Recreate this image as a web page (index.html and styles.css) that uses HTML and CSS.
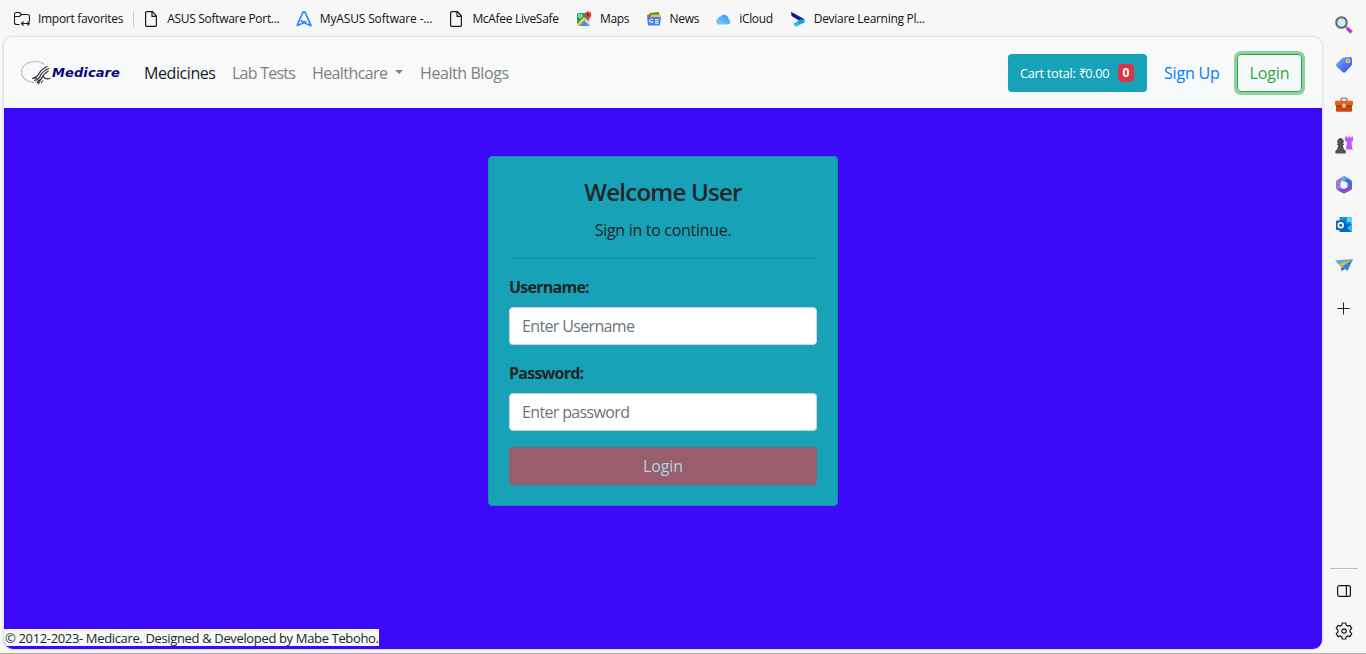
FILE: index.html
```html
<!DOCTYPE html>
<html lang="en">
<head>
<meta charset="utf-8">
<title>Medicare</title>
<link rel="stylesheet" href="styles.css">
</head>
<body>
<div class="browser">
  <div class="main">
    <div class="favorites">
      <div class="fav"><svg class="ico" viewBox="0 0 16 16" fill="none" stroke="#1b1b1b" stroke-width="1.1"><path d="M5.5 13.5H2.5a2 2 0 0 1-2-2v-8a2 2 0 0 1 2-2h3l2 2h6a2 2 0 0 1 2 2v5M.5 5.500h5l2-2M7.500 12.500h8M9.500 10.500l-2 2 2 2M13.500 10.500l2 2-2 2"/></svg><span class="w84">Import favorites</span></div>
      <div class="sep"></div>
      <div class="fav"><svg class="ico" viewBox="0 0 16 16" fill="none" stroke="#1b1b1b" stroke-width="1.200"><path d="M4 .6h5.500L13.400 5v9a1.300 1.300 0 0 1-1.300 1.400H4A1.300 1.300 0 0 1 2.600 14V2A1.300 1.300 0 0 1 4 .6zM9 .6V5.400h4.400"/></svg><span class="w112">ASUS Software Port...</span></div>
      <div class="fav"><svg class="ico" viewBox="0 0 16 16" fill="none" stroke="#2a8cf5" stroke-width="1.700" stroke-linejoin="round"><path d="M1 14.700 7 1.200h2l6 13.500-4.500-2L4.800 9.500M1 14.700l9.500-4.200"/></svg><span class="w112 looser">MyASUS Software -...</span></div>
      <div class="fav"><svg class="ico" viewBox="0 0 16 16" fill="none" stroke="#1b1b1b" stroke-width="1.200"><path d="M4 .6h5.500L13.400 5v9a1.300 1.300 0 0 1-1.300 1.400H4A1.300 1.300 0 0 1 2.600 14V2A1.300 1.300 0 0 1 4 .6zM9 .6V5.400h4.400"/></svg><span class="w87">McAfee LiveSafe</span></div>
      <div class="fav"><svg class="ico" viewBox="0 0 16 16"><path fill="#1fa463" d="M3 2h8v6L3 15H2q-1 0-1-1V4q0-2 2-2z"/><path fill="#f8cf3c" d="m1 13 7-7 2 2-7 7H1z"/><path fill="#4a8af4" d="m3 15 5.500-5.500L14 15z"/><path fill="#dcdcdc" d="m9 8 5-1v8z"/><circle cx="4.300" cy="5" r="1.500" fill="none" stroke="#fff"/><path fill="#dc4035" d="M12 .6a3.200 3.200 0 0 1 3.200 3.300c0 2.400-2.400 3.400-3.200 7-.8-3.600-3.200-4.600-3.200-7A3.200 3.200 0 0 1 12 .6z"/><circle cx="12" cy="4" r="1.100" fill="#7c1f18"/></svg><span class="w29">Maps</span></div>
      <div class="fav"><svg class="ico" viewBox="0 0 16 16"><path fill="#259b4d" d="m4 2 9-1 .5 6H4z"/><path fill="#e9493d" d="m1 4 3-1 1 5H2z"/><path fill="#f7bd24" d="M5 3.500h9l1 2-1 4H4z"/><path fill="#4b80e8" d="M1 6h14l-1 8.500H2z"/><path d="M6.800 8.600a1.800 1.800 0 1 0 .2 2.200H5.500M9 8.700h3.500M9 10.500h3.500M9 12.300h3.500" stroke="#fff" stroke-width="1" fill="none"/></svg><span class="w29">News</span></div>
      <div class="fav"><svg class="ico" viewBox="0 0 16 16"><defs><linearGradient id="cl" x1="0" y1="1" x2="1" y2="0"><stop stop-color="#8fd0ff"/><stop offset="1" stop-color="#2b94f7"/></linearGradient></defs><path fill="url(#cl)" d="M3.500 13.500a3 3 0 0 1-.7-5.700 2.600 2.600 0 0 1 2.700-2.300 4.500 4.500 0 0 1 8 2.800 2.700 2.700 0 0 1-.5 5.200z"/></svg><span class="w34">iCloud</span></div>
      <div class="fav"><svg class="ico" viewBox="0 0 16 16"><path fill="#071c8c" d="m1 .8 13.500 7.400-2.500 3L1.500 5z"/><path fill="#199fdf" d="m10 8.500 4.500-.3v3.400L6 15.500 4 13z"/><path fill="#32c2e8" d="m4 11.500 4 .5 2 1.800L6 15.500 4 14z"/></svg><span class="w111">Deviare Learning Pl...</span></div>
    </div>
    <div class="page">
      <nav class="navbar">
        <div class="brand">
          <svg class="seal" viewBox="0 0 31 24" fill="none"><ellipse cx="14" cy="11" rx="13.500" ry="10.500" stroke="#b4b4ba" stroke-width="1.200" stroke-dasharray="2 .5"/><path fill="#f8f9fa" d="M14 13 25 2l5 2-2 17-9 2z"/><path stroke="#35353b" stroke-width="1.200" d="M11 17.500q5-1 7-5t8.500-7.300M13 19.500q5-1 6.500-5T28 7.500M16 20.500q4-1 5-4t6.500-6.500M11 17.500l5-.7M16 20.500l1.500 2.200 1.800-3.400M20 22l2-2.500M22 15q2 4 7.500 2.500"/></svg>
          <span class="brand-name">Medicare</span>
        </div>
        <div class="links">
          <a class="link active w72">Medicines</a>
          <a class="link w64 tight">Lab Tests</a>
          <a class="link drop"><span class="w76">Healthcare</span><i class="caret"></i></a>
          <a class="link w90">Health Blogs</a>
        </div>
        <div class="actions">
          <button class="cart"><span class="w90">Cart total: ₹0.00</span><b class="badge">0</b></button>
          <a class="signup">Sign Up</a>
          <button class="login-outline">Login</button>
        </div>
      </nav>
      <div class="content">
        <form class="card">
          <h4 class="title">Welcome User</h4>
          <p class="subtitle">Sign in to continue.</p>
          <hr class="rule">
          <label class="label" for="user">Username:</label>
          <input class="field" id="user" placeholder="Enter Username">
          <label class="label" for="pass">Password:</label>
          <input class="field" id="pass" type="password" placeholder="Enter password">
          <button class="submit" type="button">Login</button>
        </form>
      </div>
      <footer class="footer"><span class="copyright">© 2012-2023- Medicare. Designed &amp; Developed by Mabe Teboho.</span></footer>
    </div>
  </div>
  <aside class="sidebar">
    <div class="tools">
      <svg class="tool" viewBox="0 0 20 20"><path stroke="#c22df5" stroke-width="3.400" d="m13 13 4.500 4.500"/><path stroke="#888" stroke-width="2" d="m11 11 2 2"/><circle cx="7.500" cy="7.500" r="5.300" fill="#c9eaff" stroke="#66696e" stroke-width="2"/></svg>
      <svg class="tool" viewBox="0 0 20 20"><defs><linearGradient id="tg" x1="0" y1="0" x2="1" y2="1"><stop stop-color="#6fb4fa"/><stop offset="1" stop-color="#3c42ef"/></linearGradient></defs><path fill="url(#tg)" d="M10 2.500 16.500 2q1.500 0 1.500 1.500V9q0 1-1 2l-5.500 6q-1.500 1.500-3 0L2.700 11.500q-1.500-1.500 0-3L8 3.500q1-1 2-1z"/><circle cx="14" cy="6" r="1.600" fill="#8a78a8" stroke="#ffd83d" stroke-width="1.300"/></svg>
      <svg class="tool" viewBox="0 0 20 20"><path d="M7 6V4.500q0-1.300 1.300-1.300h3.400q1.300 0 1.300 1.300V6" fill="none" stroke="#8b8d91" stroke-width="1.500"/><rect x="2" y="8" width="16" height="8.700" rx="1.200" fill="#d4420f"/><rect x="1" y="5.800" width="18" height="5" rx="1.200" fill="#e5601c"/><path d="M2 11h16" stroke="#8f2e10"/><rect x="8.300" y="8.800" width="3.400" height="4" rx="1" fill="#cfd3d7"/></svg>
      <svg class="tool" viewBox="0 0 20 20"><path fill="#be55ff" d="M11 1.500h2V3h1.200V1.500h2V3h1.200V1.500H19V6l-1.500 1 .5 5.500 1 2h-7l1-7.500-2-1z"/><path fill="#505256" d="M1.500 18.500q-1-3 1.700-4.200l1-4.300H3V8.700h1.300a3.200 3.200 0 1 1 4.400 0H10V10H8.800l1 4.300q3.200 1.200 1.700 4.200z"/></svg>
      <svg class="tool" viewBox="0 0 20 20"><path fill="#3d73d9" d="M9 1.500q1-.5 2 0l6 3.500q1 .5 1 2v7l-5-2.500V8L7 5z"/><path fill="#9d79df" d="M9 1.500 7.500 5v8L10 14.500l-3 2.700-4-2.400q-1-.6-1-2V7q0-1.500 1-2z"/><path fill="#8550c9" d="m3 14.800 9-2 6-4V13q0 1.500-1 2l-6 3.300q-1 .5-2 0z"/><path fill="#5ac1eb" d="m9 1.500 4 2.300-5.500 3V5z"/><path fill="#f7f7f7" d="m10 6 3.500 2v4L10 14l-3.500-2V8z"/></svg>
      <svg class="tool" viewBox="0 0 20 20"><rect x="5.500" y="2" width="12" height="12" rx="1" fill="#1690dc"/><path fill="#50d9ff" d="M13 2h4.500v5H13z"/><path fill="#0c68be" d="M5 9h13v8H7q-2 0-2-2z"/><path fill="#35bdf2" d="m18 9-5 4 4.500 4q.5-.3.500-1z"/><rect x="2" y="5.500" width="9.500" height="9.500" rx="1" fill="#0b62bb"/><circle cx="6.700" cy="10.200" r="2.400" fill="none" stroke="#fff" stroke-width="1.700"/></svg>
      <svg class="tool" viewBox="0 0 20 20"><path fill="#40b7ee" d="M1 5.500 19 4 6.500 11.500z"/><path fill="#2689dc" d="M19 4 13.500 16 7 11z"/><path fill="#f8ae22" d="M19 4 4.500 9 7 12.500z"/><path fill="#1564bb" d="m7 16 .5-4L11 14z"/></svg>
      <svg class="tool plus" viewBox="0 0 20 20"><path d="M9.500 3.500v12M3.500 9.500h12" stroke="#222" stroke-width="1"/></svg>
    </div>
    <div class="settings">
      <svg class="tool" viewBox="0 0 20 20" fill="none" stroke="#151515" stroke-width="1.200"><rect x="3.600" y="4.600" width="12.800" height="10.800" rx="2"/><path d="M12.400 4.600v10.800"/></svg>
      <svg class="tool" viewBox="0 0 20 20" fill="none" stroke="#151515" stroke-width="1.200" stroke-linejoin="round"><path d="M8.300 2h3.400l.6 2.300 1.300.8 2.300-.7 1.800 3-1.700 1.700v1.800l1.700 1.700-1.800 3-2.300-.7-1.300.8-.6 2.300H8.300l-.6-2.300-1.300-.8-2.300.7-1.800-3L4 10.900V9.100L2.300 7.400l1.800-3 2.300.7 1.300-.8z"/><circle cx="10" cy="10" r="2.200"/></svg>
    </div>
  </aside>
</div>
</body>
</html>
```

FILE: styles.css
```css
* { box-sizing: border-box; }
body { margin: 0; background: #f7f7f7; color: #212529; font: 16px/24px "Open Sans", "Noto Sans", sans-serif; }
.browser { display: flex; width: 1366px; height: 654px; border-bottom: 1px solid #ababab; }
.main { width: 1322px; flex: none; padding-left: 4px; }
.favorites { display: flex; align-items: center; gap: 16.6px; height: 37px; padding-left: 10px; font-size: 12px; line-height: 16px; color: #111; letter-spacing: -.3px; white-space: nowrap; }
.fav { display: flex; align-items: center; gap: 8px; }
.ico { width: 16px; height: 16px; flex: none; }
.sep { width: 1px; height: 16px; margin: 0 -7px 0 -6px; background: #ccc; }
.looser { letter-spacing: -.15px; }
.w29 { width: 29px; }
.w34 { width: 34px; }
.w84 { width: 84px; }
.w87 { width: 87px; }
.w111 { width: 111px; }
.w112 { width: 112px; }
.page { display: flex; flex-direction: column; height: 612px; background: linear-gradient(#f8f9fa 70px, #3c0af9 71px); border-radius: 9px; overflow: hidden; box-shadow: 0 0 3px #bbb; }
.navbar { display: flex; align-items: center; height: 71px; flex: none; padding: 0 20px 0 17px; background: #f8f9fa; }
.brand { display: flex; align-items: center; width: 99px; }
.seal { width: 31px; height: 24px; flex: none; }
.brand-name { color: #060675; font: italic 700 13px/20px "DejaVu Sans", sans-serif; letter-spacing: .1px; }
.links { display: flex; gap: 16px; margin-left: 24px; white-space: nowrap; letter-spacing: -.42px; }
.link { color: #7f8080; }
.active { color: #191919; }
.tight { letter-spacing: -.75px; }
.w64 { width: 64px; }
.w72 { width: 72px; }
.w76 { width: 76px; letter-spacing: -.6px; }
.w90 { width: 90px; }
.drop { display: flex; align-items: center; gap: 7px; width: 92px; }
.caret { margin-top: -2px; border: 4.500px solid transparent; border-top-color: currentColor; border-bottom: 0; }
.actions { display: flex; align-items: center; margin-left: auto; }
.cart { display: flex; align-items: center; gap: 8px; width: 139px; height: 38px; padding: 0 12px; border: 0; border-radius: 4px; background: #17a2b8; color: #fff; font: 12.800px/20px "Open Sans", sans-serif; letter-spacing: -.3px; white-space: nowrap; text-align: left; }
.badge { width: 16px; height: 18px; border-radius: 4px; background: #dc3545; font-size: 12px; line-height: 18px; text-align: center; letter-spacing: 0; }
.signup { width: 56px; margin: 0 17px; color: #007bff; letter-spacing: -.2px; white-space: nowrap; }
.login-outline { width: 65px; height: 38px; padding: 0; border: 1px solid #28a745; border-radius: 4px; background: transparent; color: #28a745; font: inherit; letter-spacing: -.1px; box-shadow: 0 0 0 3px rgba(40,167,69,.5); }
.content { display: flex; justify-content: center; align-items: flex-start; flex: 1; padding-top: 48px; }
.card { width: 350px; height: 350px; padding: 20px; border: 1px solid #158fab; border-radius: 4px; background: #17a2b8; }
.title { margin: 0 0 12px; font-size: 24px; line-height: 29px; font-weight: 600; text-align: center; letter-spacing: -.75px; }
.subtitle { margin: 0 0 16px; text-align: center; letter-spacing: -.3px; }
.rule { height: 1px; margin: 0 0 16px; border: 0; background: #158fa9; }
.label { display: block; margin-bottom: 8px; font-weight: 700; letter-spacing: -.75px; }
.field { display: block; width: 100%; height: 38px; margin: 0 0 16px; padding: 6px 12px; border: 1px solid #ced4da; border-radius: 4px; background: #fff; font: inherit; letter-spacing: -.65px; }
.field::placeholder { color: #6c757d; opacity: 1; }
.submit { width: 100%; height: 38px; padding: 0; border: 0; border-radius: 4px; background: #995d6e; color: #acd8df; font: inherit; letter-spacing: -.1px; }
.footer { display: flex; height: 20px; }
.copyright { width: 375px; height: 17px; padding-left: 1px; background: #f8f9fa; font-size: 13px; line-height: 18px; letter-spacing: -.35px; white-space: nowrap; }
.sidebar { display: flex; flex-direction: column; justify-content: space-between; align-items: center; width: 44px; padding: 15px 0 12px; }
.tools { display: flex; flex-direction: column; gap: 20px; }
.tool { display: block; width: 20px; height: 20px; }
.plus { margin-top: 4px; }
.settings { display: flex; flex-direction: column; align-items: center; gap: 20px; width: 28px; padding-top: 12px; border-top: 1px solid #bdbdbd; }
```
